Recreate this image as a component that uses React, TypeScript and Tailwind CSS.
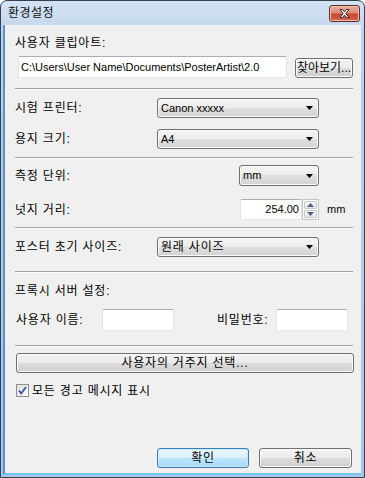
import React from "react";

const font = {
  fontFamily: '"Liberation Sans", "Noto Sans CJK KR", sans-serif',
};

// Korean labels: a bit of tracking to mimic Gulim spacing
const Ko = ({ children, className = "" }: { children: React.ReactNode; className?: string }) => (
  <span className={`tracking-[0.8px] leading-none whitespace-nowrap ${className}`}>{children}</span>
);

const Separator = ({ className = "" }: { className?: string }) => (
  <div className={`h-[2px] border-t border-[#a0a0a0] border-b border-b-white ${className}`} />
);

const Combo = ({
  value,
  className = "",
  latin = false,
}: {
  value: string;
  className?: string;
  latin?: boolean;
}) => (
  <div
    className={`flex items-center justify-between rounded-[3px] border border-[#707070] bg-[linear-gradient(#f4f4f4,#ececec_50%,#dfdfdf_50%,#d3d3d3)] shadow-[inset_0_0_0_1px_#fafafa] pl-[3px] pr-[5px] ${className}`}
  >
    <span className={`leading-none ${latin ? "text-[11px]" : "tracking-[0.8px]"}`}>{value}</span>
    <svg width="7" height="4" viewBox="0 0 7 4">
      <path d="M0 0h7L3.5 4z" fill="#000" />
    </svg>
  </div>
);

const TextBox = ({ value = "", className = "", right = false }: { value?: string; className?: string; right?: boolean }) => (
  <div
    className={`flex items-center bg-white border border-[#e2e3ea] border-t-[#abadb3] border-b-[#e3e9ef] rounded-[2px] px-[2px] ${right ? "justify-end" : ""} ${className}`}
  >
    <span className="leading-none whitespace-nowrap text-[11px]">{value}</span>
  </div>
);

const Button = ({
  label,
  className = "",
  primary = false,
  tight = false,
}: {
  label: string;
  className?: string;
  primary?: boolean;
  tight?: boolean;
}) => (
  <div
    className={`flex items-center justify-center rounded-[3px] border ${
      primary
        ? "border-[#3c7fb1] bg-[linear-gradient(#eaf6fd,#d9f0fc_50%,#bee6fd_50%,#a7d9f5)] shadow-[inset_0_0_0_1px_#c7e8fa]"
        : "border-[#707070] bg-[linear-gradient(#f2f2f2,#ebebeb_50%,#dddddd_50%,#cfcfcf)] shadow-[inset_0_0_0_1px_#fbfbfb]"
    } ${className}`}
  >
    <span className={`leading-none whitespace-nowrap ${tight ? "tracking-[0px]" : "tracking-[0.8px]"}`}>{label}</span>
  </div>
);

const Spinner = () => (
  <div className="flex flex-col w-[17px] h-full border border-[#c4c4c4] bg-white p-[1px] gap-[1px]">
    <div className="flex-1 flex items-center justify-center rounded-[1px] border border-[#c8c8c8] bg-[linear-gradient(#f8f8f8,#e4e4e4)]">
      <svg width="7" height="4" viewBox="0 0 7 4">
        <path d="M0 4h7L3.5 0z" fill="#4d6185" />
      </svg>
    </div>
    <div className="flex-1 flex items-center justify-center rounded-[1px] border border-[#c8c8c8] bg-[linear-gradient(#f8f8f8,#e4e4e4)]">
      <svg width="7" height="4" viewBox="0 0 7 4">
        <path d="M0 0h7L3.5 4z" fill="#4d6185" />
      </svg>
    </div>
  </div>
);

const CloseButton = () => (
  <div className="flex items-center justify-center w-[31px] h-[17px] rounded-[3px] border border-[#6b2a22] bg-[linear-gradient(#eab0a3,#dc8a78_45%,#c8452d_55%,#d2664d)] shadow-[inset_0_0_0_1px_#f0c0b4]">
    <svg width="13" height="11" viewBox="0 0 13 11">
      <path
        d="M2 1.5h2.6L6.5 4 8.4 1.5H11L7.9 5.5 11 9.5H8.4L6.5 7 4.6 9.5H2L5.1 5.5z"
        fill="#fff"
        stroke="#3a2a2a"
        strokeWidth="1"
        strokeLinejoin="round"
      />
    </svg>
  </div>
);

const CheckBox = () => (
  <div className="flex items-center justify-center w-[13px] h-[13px] border border-[#8e8f8f] bg-[linear-gradient(135deg,#dcdcdc,#ffffff)] p-[1px]">
    <svg width="9" height="9" viewBox="0 0 9 9">
      <path d="M1 4.5 3.2 7.5 8 1" fill="none" stroke="#3b54a0" strokeWidth="1.8" />
    </svg>
  </div>
);

export default function App() {
  return (
    <div className="w-[365px] h-[478px] bg-white" style={font}>
      <div className="w-full h-full flex flex-col rounded-t-[7px] border border-[#34404f] bg-[linear-gradient(#d3e3f4,#bcd2ea_40px,#a9c6e6)] text-[12px] text-black">
        {/* Title bar */}
        <div className="h-[24px] flex items-center justify-between pl-[7px] pr-[4px]">
          <span className="leading-none text-[12px] tracking-[0.5px] text-[#111]">환경설정</span>
          <div className="self-start mt-[4px]">
            <CloseButton />
          </div>
        </div>

        {/* Client area */}
        <div className="flex-1 flex flex-col ml-[2px] mr-[3px] mb-[2px] bg-[#f0f0f0] border-b-2 border-b-[#6fc6ea] border-l-2 border-l-[#5592d6] pl-[10px] pr-[8px]">
          <div className="h-[16px] mt-[10px] flex items-center">
            <Ko>사용자 클립아트:</Ko>
          </div>

          <div className="h-[22px] mt-[5px] flex items-end">
            <TextBox value="C:\Users\User Name\Documents\PosterArtist\2.0" className="ml-[3px] w-[269px] h-[22px]" />
            <Button label="찾아보기..." tight className="ml-[8px] w-[58px] h-[20px]" />
          </div>

          <Separator className="mt-[10px]" />

          <div className="h-[20px] mt-[8px] flex items-center">
            <Ko className="w-[142px]">시험 프린터:</Ko>
            <Combo value="Canon xxxxx" latin className="w-[162px] h-[20px]" />
          </div>

          <div className="h-[20px] mt-[11px] flex items-center">
            <Ko className="w-[142px]">용지 크기:</Ko>
            <Combo value="A4" latin className="w-[162px] h-[20px]" />
          </div>

          <Separator className="mt-[8px]" />

          <div className="h-[21px] mt-[6px] flex items-center">
            <Ko className="w-[224px]">측정 단위:</Ko>
            <Combo value="mm" latin className="w-[80px] h-[21px]" />
          </div>

          <div className="h-[21px] mt-[13px] flex items-center">
            <Ko className="w-[225px]">넛지 거리:</Ko>
            <TextBox value="254.00" right className="w-[62px] h-[21px]" />
            <Spinner />
            <span className="ml-[8px] text-[11px]">mm</span>
          </div>

          <Separator className="mt-[7px]" />

          <div className="h-[20px] mt-[8px] flex items-center">
            <Ko className="w-[142px]">포스터 초기 사이즈:</Ko>
            <Combo value="원래 사이즈" className="w-[162px] h-[20px]" />
          </div>

          <Separator className="mt-[14px]" />

          <div className="h-[16px] mt-[10px] flex items-center">
            <Ko>프록시 서버 설정:</Ko>
          </div>

          <div className="h-[22px] mt-[10px] flex items-center">
            <Ko className="ml-[1px] w-[86px]">사용자 이름:</Ko>
            <TextBox className="w-[72px] h-[22px]" />
            <Ko className="ml-[43px] w-[59px]">비밀번호:</Ko>
            <TextBox className="w-[72px] h-[22px]" />
          </div>

          <Separator className="mt-[14px]" />

          <Button label="사용자의 거주지 선택..." className="mt-[6px] ml-[1px] w-[338px] h-[20px]" />

          <div className="h-[13px] mt-[11px] ml-[1px] flex items-center gap-[3px]">
            <CheckBox />
            <Ko>모든 경고 메시지 표시</Ko>
          </div>

          <div className="mt-auto mb-[5px] flex items-center pl-[142px] gap-[10px]">
            <Button label="확인" primary className="w-[92px] h-[20px]" />
            <Button label="취소" className="w-[93px] h-[20px]" />
          </div>
        </div>
      </div>
    </div>
  );
}
